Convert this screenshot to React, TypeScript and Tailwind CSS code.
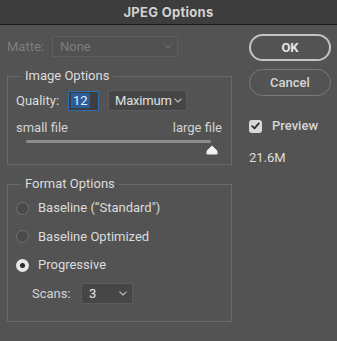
import React from "react";

function Chevron({ className = "" }: { className?: string }) {
  return (
    <svg width="8" height="5" viewBox="0 0 8 5" className={className} fill="none">
      <path d="M0.8 0.8 L4 4 L7.2 0.8" stroke="currentColor" strokeWidth="1.1" strokeLinecap="round" strokeLinejoin="round" />
    </svg>
  );
}

function Radio({ checked, label }: { checked?: boolean; label: string }) {
  return (
    <div className="flex items-center h-[20px]">
      {checked ? (
        <span className="w-[13px] h-[13px] rounded-full bg-[#e6e6e6] flex items-center justify-center">
          <span className="w-[5px] h-[5px] rounded-full bg-[#2a2a2a]" />
        </span>
      ) : (
        <span className="w-[13px] h-[13px] rounded-full bg-[#4a4a4a] border border-[#707070]" />
      )}
      <span className="ml-[9px] text-[#dcdcdc]">{label}</span>
    </div>
  );
}

export default function App() {
  return (
    <div
      className="w-[337px] h-[341px] bg-[#535353] flex flex-col text-[13px] leading-[16px] overflow-hidden"
      style={{ fontFamily: "Roboto, 'Noto Sans', sans-serif" }}
    >
      <div className="h-[25px] shrink-0 bg-[#3d3d3d] border-b border-[#1c1c1c] flex items-center justify-center">
        <span className="font-bold text-[13px] text-[#d2d2d2] tracking-[0.3px]" style={{ fontFamily: "Inter, sans-serif" }}>JPEG Options</span>
      </div>

      <div className="flex flex-1">
        <div className="w-[232px] pl-[7px]">
          <div className="flex items-center mt-[11px] h-[21px]">
            <span className="w-[45px] text-[#7e7e7e]">Matte:</span>
            <div className="w-[126px] h-[21px] bg-[#515151] border border-[#5e5e5e] flex items-center justify-between pl-[7px] pr-[5px] text-[#7e7e7e]">
              <span>None</span>
              <Chevron className="text-[#6a6a6a]" />
            </div>
          </div>

          <fieldset className="mt-[11px] border border-[#6a6a6a] pl-[8px] pr-[9px] pb-[8px] h-[97px]">
            <legend className="ml-[5px] px-[4px] text-[#dcdcdc]">Image Options</legend>
            <div className="flex items-center mt-[6px] h-[21px]">
              <span className="w-[52px] text-[#dcdcdc]">Quality:</span>
              <div className="w-[31px] h-[20px] bg-[#3e3e3e] border border-[#2f6db3] flex items-center pl-[2px]">
                <span className="bg-[#2c5d9b] text-[#e8eef8] px-[2px] leading-[15px]">12</span>
              </div>
              <div className="ml-[9px] w-[79px] h-[21px] bg-[#464646] border border-[#5c5c5c] flex items-center justify-between pl-[6px] pr-[4px] text-[#e0e0e0]">
                <span className="tracking-[-0.2px]">Maximum</span>
                <Chevron className="text-[#bdbdbd]" />
              </div>
            </div>
            <div className="flex justify-between mt-[9px] text-[#d4d4d4]">
              <span>small file</span>
              <span>large file</span>
            </div>
            <div className="ml-[10px] mr-[11px] mt-[4px] relative h-[14px]">
              <div className="h-[3px] bg-[#8c8c8c] rounded-full" />
              <svg width="12" height="10" viewBox="0 0 12 10" className="absolute right-[-7px] top-[5px]">
                <path d="M6 0.5 L10.6 5 Q11.5 5.9 11.5 7 V8.5 Q11.5 9.5 10.5 9.5 H1.5 Q0.5 9.5 0.5 8.5 V7 Q0.5 5.9 1.4 5 Z" fill="#f2f2f2" />
              </svg>
            </div>
          </fieldset>

          <fieldset className="mt-[11px] border border-[#6a6a6a] pl-[8px] pr-[9px] h-[146px]">
            <legend className="ml-[5px] px-[4px] text-[#dcdcdc]">Format Options</legend>
            <div className="flex flex-col gap-[8.5px] mt-[6px]">
              <Radio label={'Baseline (\u201CStandard")'} />
              <Radio label="Baseline Optimized" />
              <Radio checked label="Progressive" />
            </div>
            <div className="flex items-center mt-[8px] ml-[16px] h-[21px]">
              <span className="w-[49px] text-[#d4d4d4]">Scans:</span>
              <div className="w-[52px] h-[21px] bg-[#464646] border border-[#5c5c5c] flex items-center justify-between pl-[7px] pr-[5px] text-[#e6e6e6]">
                <span>3</span>
                <Chevron className="text-[#bdbdbd]" />
              </div>
            </div>
          </fieldset>
        </div>

        <div className="ml-[17px] w-[82px] flex flex-col">
          <button className="mt-[9px] h-[27px] rounded-full border-2 border-[#c4c4c4] font-bold text-[13px] text-[#e6e6e6]">OK</button>
          <button className="mt-[8px] h-[27px] rounded-full border-[1.5px] border-[#7a7a7a] font-medium text-[13px] text-[#d6d6d6]">Cancel</button>
          <div className="flex items-center mt-[23px] h-[14px]">
            <span className="w-[13px] h-[13px] rounded-[3px] bg-[#d9d9d9] flex items-center justify-center">
              <svg width="9" height="8" viewBox="0 0 9 8" fill="none">
                <path d="M1.2 4.2 L3.5 6.4 L7.8 1.4" stroke="#2e2e2e" strokeWidth="1.8" strokeLinecap="round" strokeLinejoin="round" />
              </svg>
            </span>
            <span className="ml-[10px] font-medium text-[13px] text-[#d6d6d6]">Preview</span>
          </div>
          <span className="mt-[17px] text-[13px] text-[#dcdcdc]">21.6M</span>
        </div>
      </div>
    </div>
  );
}
